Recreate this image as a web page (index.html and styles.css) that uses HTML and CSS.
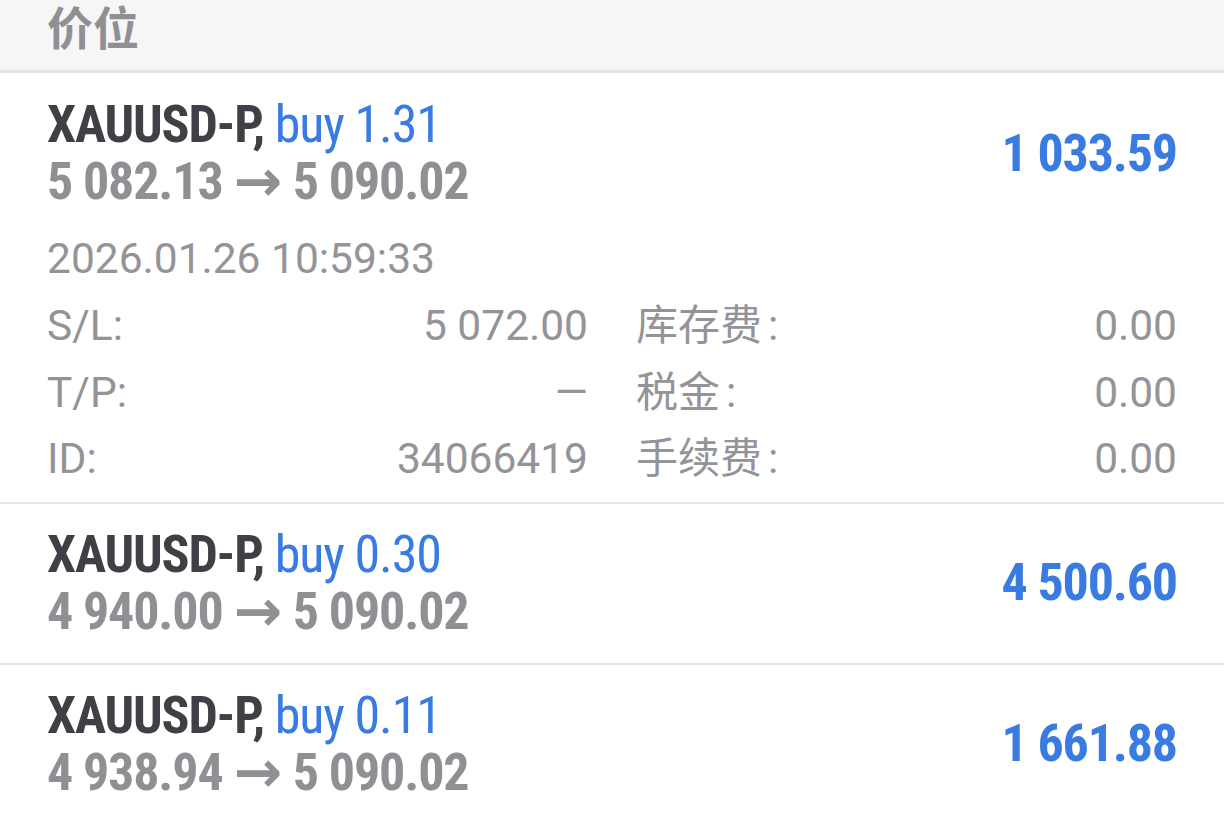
FILE: index.html
```html
<!DOCTYPE html>
<html lang="zh">
<head>
<meta charset="utf-8">
<link rel="stylesheet" href="styles.css">
</head>
<body>
<div class="header">价位</div>

<div class="pos pos-open">
  <div class="pos-main">
    <div class="pos-info">
      <div class="title"><span class="sym">XAUUSD-P,</span> <span class="type">buy 1.31</span></div>
      <div class="prices">5 082.13 <span class="arrow">→</span> 5 090.02</div>
    </div>
    <div class="profit">1 033.59</div>
  </div>
  <div class="details">
    <div class="date">2026.01.26 10:59:33</div>
    <div class="grid">
      <div class="cell"><span class="lbl">S/L:</span><span class="val">5 072.00</span></div>
      <div class="cell"><span class="lbl cjk">库存费<span class="colon">:</span></span><span class="val">0.00</span></div>
      <div class="cell"><span class="lbl">T/P:</span><span class="val">—</span></div>
      <div class="cell"><span class="lbl cjk">税金<span class="colon">:</span></span><span class="val">0.00</span></div>
      <div class="cell"><span class="lbl">ID:</span><span class="val">34066419</span></div>
      <div class="cell"><span class="lbl cjk">手续费<span class="colon">:</span></span><span class="val">0.00</span></div>
    </div>
  </div>
</div>

<div class="pos">
  <div class="pos-main">
    <div class="pos-info">
      <div class="title"><span class="sym">XAUUSD-P,</span> <span class="type">buy 0.30</span></div>
      <div class="prices">4 940.00 <span class="arrow">→</span> 5 090.02</div>
    </div>
    <div class="profit">4 500.60</div>
  </div>
</div>

<div class="pos">
  <div class="pos-main">
    <div class="pos-info">
      <div class="title"><span class="sym">XAUUSD-P,</span> <span class="type">buy 0.11</span></div>
      <div class="prices">4 938.94 <span class="arrow">→</span> 5 090.02</div>
    </div>
    <div class="profit">1 661.88</div>
  </div>
</div>
</body>
</html>
```

FILE: styles.css
```css
html, body {
  margin: 0;
  padding: 0;
  background: #ffffff;
}
body {
  width: 1224px;
  height: 813px;
  overflow: hidden;
  font-family: Roboto, "Noto Sans CJK SC", sans-serif;
}
.header {
  height: 70px;
  background: #f6f6f6;
  border-bottom: 3px solid #e4e4e4;
  padding-left: 47px;
  font-family: "Noto Sans CJK SC", sans-serif;
  font-weight: 700;
  font-size: 46px;
  line-height: 51px;
  color: #909094;
}
.pos {
  border-bottom: 2px solid #e6e6e6;
  padding: 22px 47px 23px;
}
.pos-open {
  padding-top: 23px;
  padding-bottom: 25px;
}
.pos-main {
  display: flex;
  align-items: center;
  justify-content: space-between;
}
.title, .prices, .profit {
  font-family: "Roboto Condensed", Roboto, sans-serif;
  font-stretch: condensed;
  font-size: 52px;
  line-height: 57px;
  letter-spacing: -1.15px;
  white-space: nowrap;
}
.sym {
  font-weight: 700;
  color: #3f3f45;
}
.type {
  font-weight: 400;
  color: #3a7be2;
}
.prices {
  font-weight: 700;
  color: #909094;
}
.arrow {
  font-family: "DejaVu Sans", sans-serif;
  font-stretch: normal;
  font-weight: 700;
  font-size: 58px;
  letter-spacing: 0;
  line-height: 0;
  vertical-align: -2px;
}
.profit {
  font-weight: 700;
  color: #3a7be2;
}
.details {
  padding-top: 15px;
  margin-bottom: -15px;
  font-size: 42.5px;
  line-height: 67px;
  color: #949498;
}
.date {
  white-space: nowrap;
}
.grid {
  display: grid;
  grid-template-columns: 1fr 1fr;
  grid-auto-rows: 66.5px;
  column-gap: 48px;
}
.cell {
  display: flex;
  align-items: baseline;
  justify-content: space-between;
  height: 66.5px;
  overflow: visible;
}
.lbl, .val {
  line-height: 67px;
}
.cjk {
  font-family: "Noto Sans CJK SC", sans-serif;
  font-size: 42px;
  line-height: 1;
}
.colon {
  font-family: Roboto, sans-serif;
  font-size: 42.5px;
  line-height: 1;
  margin-left: 6px;
}
.val {
  font-family: Roboto, sans-serif;
}
```
